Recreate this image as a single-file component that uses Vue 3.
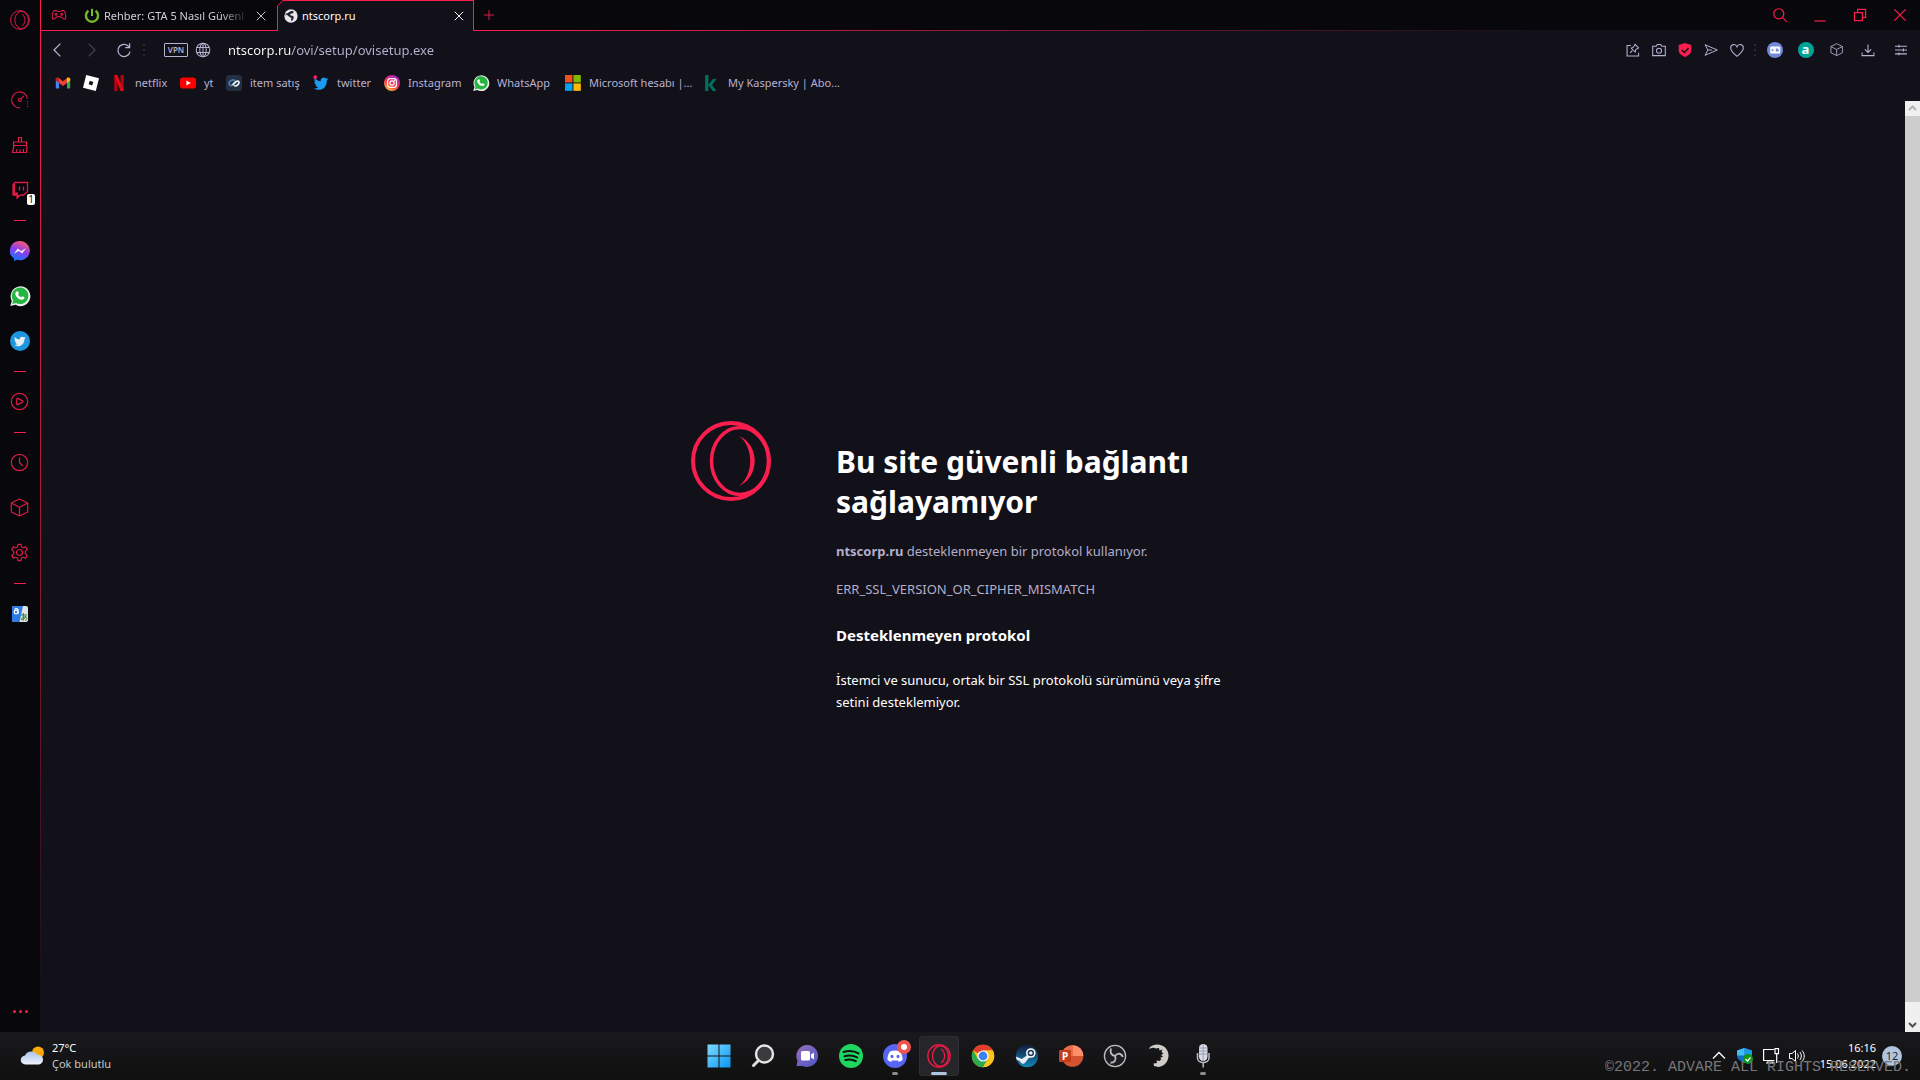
<script setup>
import { ref } from 'vue'

const address = ref('ntscorp.ru/ovi/setup/ovisetup.exe')

const icons = {
  opera: '<g fill="none" stroke="currentColor"><circle cx="10" cy="10" r="9.400"/><ellipse cx="11.600" cy="10" rx="6.800" ry="8.600"/><path d="M12 4.200c4 3 4 8.600 0 11.600"/></g>',
  gauge: '<g fill="none" stroke="currentColor" stroke-width="1.1"><path d="M10 17.900a8 8 0 1 1 7.500-9.200"/><path d="M17.600 11v6" stroke-dasharray="1 1.500"/><circle cx="9.800" cy="10" r="1.500"/><path d="M10.900 8.900l3-3"/></g>',
  broom: '<g fill="none" stroke="currentColor" stroke-width="1.200"><path d="M8.500 7V2.500h3V7M3.500 7h13v3.500h-13zM4 10.500L2.500 17.500h14l.5-7M6.500 17l.5-3M10 17v-2.500M13.500 17v-3"/></g>',
  twitch: '<path d="M3 5l2-2.500h12.500v9L13.500 15h-3L7 18v-3H3z" fill="none" stroke="currentColor" stroke-width="1.300"/><path d="M3 5l2-2v9.500h3V15h2l-3 3v-3H3z" fill="currentColor"/><path d="M9.500 6.500v4M13.500 6.500v4" stroke="currentColor" stroke-width="1.300"/>',
  messenger: '<defs><linearGradient id="ms" x1="0.300" y1="1" x2="0.700" y2="0"><stop offset="0" stop-color="#0a7cff"/><stop offset=".5" stop-color="#8a3df0"/><stop offset="1" stop-color="#ff5c6a"/></linearGradient></defs><path d="M10 0a10 9.600 0 1 1-3 18.800L4 20v-2.400A9.700 9.700 0 0 1 10 0z" fill="url(#ms)"/><path d="M3.800 12.700l4-5.200 3.300 2.400 5-2.700-4 5.300-3.300-2.400z" fill="#eee"/>',
  whatsapp: '<path d="M.3 20l1.500-5A9.900 9.900 0 1 1 5.500 18.800z" fill="#eee"/><path d="M2.200 18l1-3.600A8.300 8.300 0 1 1 6 17z" fill="#25b541"/><path d="M7 5.300c.5-.3 1 0 1.200.5l.6 1.500c0 .4-.5.8-.7 1.200.7 1.400 1.700 2.200 3.200 2.800.4-.2.800-1 1.200-1l1.900 1c.2 1.200-.7 2.200-2 2.400C8.700 14 5 10 5.300 7.200 5.500 6.200 6.300 5.500 7 5.300z" fill="#fff"/>',
  twitterRound: '<circle cx="10" cy="10" r="10" fill="#1d96e0"/><path d="M15.700 6.600l-1.300.4c.5-.3.800-.7 1-1.200l-1.500.6a2.500 2.500 0 0 0-4.200 2.200C7.500 8.500 5.900 7.500 4.800 6.100c-.7 1.200-.3 2.500.7 3.200l-1-.3c0 1.200.8 2 1.900 2.400h-1c.3 1 1.200 1.600 2.200 1.700-1 .8-2.200 1.100-3.500 1 5 2.900 10.500-.4 10.400-6.200z" fill="#eee"/>',
  player: '<g fill="none" stroke="currentColor" stroke-width="1.200"><circle cx="9.500" cy="9.500" r="8.200"/><path d="M6.700 7c0-.6.4-.8.9-.6l5 2.500c.5.300.5.900 0 1.200l-5 2.500c-.5.200-.9 0-.9-.6z"/></g>',
  clock: '<g fill="none" stroke="currentColor" stroke-width="1.200"><circle cx="9.500" cy="9.500" r="8.200"/><path d="M9.500 4.500v5l3.200 3.500"/></g>',
  cube: '<path d="M9.500 1l8.200 4v9l-8.200 4-8.200-4V5zM1.300 5l8.200 4.300L17.700 5M9.500 9.300V18" fill="none" stroke="currentColor" stroke-width="1.200" stroke-linejoin="round"/>',
  gear: '<g fill="none" stroke="currentColor" stroke-width="1.200" stroke-linejoin="round" transform="translate(-.5 -.5)"><circle cx="10" cy="10" r="3"/><path d="M8 4.400L8.500 1.800h3L12 4.400l1.600.9 2.500-.9 1.700 2.700-2 1.800v2.200l2 1.800-1.700 2.700-2.500-.9-1.600.9-.5 2.600h-3L8 15.600l-1.600-.9-2.500.9-1.700-2.700 2-1.800V8.900l-2-1.800 1.700-2.700 2.500.9z"/></g>',
  translate: '<rect x="2" y="2" width="16" height="16" rx="2" fill="#e2e2e2"/><path d="M4 2h9L9.500 18H4a2 2 0 0 1-2-2V4a2 2 0 0 1 2-2z" fill="#2d7be5"/><circle cx="6" cy="8" r="1.800" fill="none" stroke="#fff" stroke-width="1.200"/><path d="M4.500 5.200c2-1 3.600-.4 3.600 1.300v3.600" fill="none" stroke="#fff" stroke-width="1.200"/><path d="M11 11h6M13.300 9v7.500M16 12c-1 3-3.500 4.500-4.500 3.500s2-3.200 4-2.500 1.500 3-.5 3.500" fill="none" stroke="#2f7d32"/>',
  gamepad: '<g fill="none" stroke="currentColor" stroke-width="1.400"><path d="M4 4.500h2.500c1.500 1.500 5.500 1.500 7 0H16c1.500 1.500 2.500 5 2.500 9 0 2.200-3 2.200-4 .2-1.200-2.200-7.800-2.200-9 0-1 2-4 2-4-.2 0-4 1-7.500 2.500-9z"/><circle cx="6.500" cy="9" r="1.200"/><circle cx="13.500" cy="9" r="1.200"/></g>',
  power: '<path d="M5.500 3.500a7.600 7.600 0 1 0 9 0" fill="none" stroke="#76b82a" stroke-width="3"/><path d="M10 1v9" stroke="#76b82a" stroke-width="2.600"/>',
  earth: '<circle cx="10" cy="10" r="9.500" fill="#e8e8ec"/><path d="M11 2.500l3 1.500-1 2-3 .5-1.500 2.500 3.500.5 2 1.500-.5 3-2 3-1.500-.5.500-3.500-2.500-1.500L3.500 8 2 9.500l.5-3 2.500-.3 2-1.700z" fill="#25232c"/>',
  close: '<path d="M3 3l14 14M17 3L3 17" stroke="currentColor" stroke-width="1.600"/>',
  plus: '<path d="M10 1.500v17M1.500 10h17" stroke="currentColor" stroke-width="1.700"/>',
  search: '<g fill="none" stroke="currentColor" stroke-width="1.500"><circle cx="8.500" cy="8.500" r="6.300"/><path d="M13 13l5.500 5.500"/></g>',
  minimise: '<path d="M3 17.500h14" stroke="currentColor" stroke-width="1.500"/>',
  restore: '<path d="M3 7h10v10H3zM7 7V3h10v10h-4" fill="none" stroke="currentColor" stroke-width="1.500"/>',
  back: '<path d="M13 2L5 10l8 8" fill="none" stroke="currentColor" stroke-width="1.600"/>',
  forward: '<path d="M7 2l8 8-8 8" fill="none" stroke="currentColor" stroke-width="1.600"/>',
  reload: '<path d="M16.500 6.500A7.600 7.600 0 1 0 17.500 12M17 1.500v5.500h-5.500" fill="none" stroke="currentColor" stroke-width="1.600"/>',
  globe: '<g fill="none" stroke="currentColor" stroke-width="1.300"><circle cx="10" cy="10" r="8.500"/><ellipse cx="10" cy="10" rx="4" ry="8.500"/><path d="M2.500 7h15M2.500 13h15M10 1.500v17"/></g>',
  pin: '<path d="M7 3.500H1.500v15h16.500V14M6 14l3-3M7.500 7.500l5.500 5.500 1-3.500 4-2.500-5-5L10.500 6z" fill="none" stroke="currentColor" stroke-width="1.500"/>',
  camera: '<g fill="none" stroke="currentColor" stroke-width="1.500"><path d="M1 4.500h5L7.500 2h5L14 4.500h5v13.500H1z"/><circle cx="10" cy="11" r="3.600"/></g>',
  shield: '<path d="M10 0l9 2.800v8c0 4.500-4.500 7.200-9 9.200-4.500-2-9-4.700-9-9.200v-8z" fill="#fa1e4e"/><path d="M5.500 10l3.500 3.500 6-6" fill="none" stroke="#121019" stroke-width="2.200"/>',
  send: '<path d="M1.500 2.500L19 10 1.500 17.500 5.500 10zM5.500 10h6" fill="none" stroke="currentColor" stroke-width="1.400"/>',
  heart: '<path d="M10 19C5 14.500 1 11.500 1 7c0-5.500 7-6.500 9-1.500C12 .5 19 1.500 19 7c0 4.500-4 7.500-9 12z" fill="none" stroke="currentColor" stroke-width="1.500"/>',
  account: '<circle cx="10" cy="10" r="10" fill="#7289da"/><rect x="4" y="5.500" width="12.500" height="9" rx="1.500" fill="#fff"/><path d="M6 8l3 2-3 2zM11 8h2l1.500 1.500V12H11z" fill="#7289da"/>',
  assistant: '<circle cx="10" cy="10" r="10" fill="#00a396"/>',
  download: '<path d="M10 2v11M5.500 9l4.500 4.500L14.500 9M1.500 13.500v4.500h17v-4.500" fill="none" stroke="currentColor" stroke-width="1.500"/>',
  sliders: '<path d="M1.500 4.500h17M1.500 10h17M1.500 15.500h17M7 2.500v4M13.500 8v4M7 13.500v4" stroke="currentColor" stroke-width="1.500"/>',
  gmail: '<path d="M1 4.500h4V17H2a1 1 0 0 1-1-1z" fill="#4285f4"/><path d="M15 4.500h4V16a1 1 0 0 1-1 1h-3z" fill="#34a853"/><path d="M1 5.500C1 3 3.500 2.500 5 3.500V10L1 7z" fill="#c5221f"/><path d="M5 3.700l5 4 5-4V10l-5 3.800L5 10z" fill="#ea4335"/><path d="M19 5.500c0-2.500-2.500-3-4-2V10l4-3z" fill="#fbbc04"/>',
  roblox: '<path d="M4 0l16 4.200L16 20 0 15.800zM8.500 7.200l-1.400 4.400 4.400 1.400 1.400-4.400z" fill="#fff" fill-rule="evenodd"/>',
  netflix: '<path d="M4 0h4v20H4zM12 0h4v20h-4z" fill="#b1060f"/><path d="M4 0h4l8 20h-4z" fill="#e50914"/>',
  youtube: '<rect y="3" width="20" height="14" rx="3.500" fill="#f00"/><path d="M8 7l5.500 3L8 13z" fill="#fff"/>',
  item: '<rect width="20" height="20" rx="4" fill="#232f42"/><path d="M11 7c-2-2-6 0-7 2.500-.8 3 2 4.500 4.500 3L13 8" fill="none" stroke="#4f7fb0" stroke-width="2.200"/><path d="M8 12.500l4-4C15 6.500 17 8 16 10.500c-1 2.500-4 4-6 2.500" fill="none" stroke="#e8edf2" stroke-width="2.200"/>',
  bird: '<path d="M18.800 4.600l-2 .7c.8-.5 1.200-1.200 1.500-2l-2.300 1A3.900 3.900 0 0 0 9.500 7.700C6.500 7.500 4 6 2.200 4c-1 1.900-.4 4 1.100 5.200L1.700 8.800c0 1.900 1.300 3.200 3 3.700l-1.600.1c.5 1.500 1.900 2.600 3.500 2.700-1.600 1.200-3.500 1.700-5.400 1.500 8 4.700 16.200-.5 16-9.700z" fill="#1d9bf0"/><circle cx="2.800" cy="2.600" r="2.400" fill="#fa1e6e"/>',
  instagram: '<defs><linearGradient id="ig" x1="0.200" y1="1" x2="0.800" y2="0"><stop offset="0" stop-color="#ffc83c"/><stop offset=".45" stop-color="#f8344f"/><stop offset="1" stop-color="#a023d8"/></linearGradient></defs><circle cx="10" cy="10" r="10" fill="url(#ig)"/><rect x="4.500" y="4.500" width="11" height="11" rx="3" fill="none" stroke="#fff" stroke-width="1.500"/><circle cx="10" cy="10" r="2.700" fill="none" stroke="#fff" stroke-width="1.500"/><circle cx="13.200" cy="6.800" r=".8" fill="#fff"/>',
  microsoft: '<path d="M0 0h9.300v9.300H0z" fill="#f25022"/><path d="M10.500 0h9.300v9.300h-9.300z" fill="#7fba00"/><path d="M0 10.500h9.300v9.300H0z" fill="#00a4ef"/><path d="M10.500 10.500h9.300v9.300h-9.300z" fill="#ffb900"/>',
  kaspersky: '<path d="M1.500 0h4v20h-4zM11 5h4.500l-5.500 7.500 5.500 7.500H11l-5.500-7.500z" fill="#007360"/>',
}

const strip = [
  ['gauge', 'broom', 'twitch'],
  ['messenger', 'whatsapp', 'twitterRound'],
  ['player'],
  ['clock', 'cube', 'gear'],
  ['translate'],
]

const bookmarks = [
  { icon: 'gmail' },
  { icon: 'roblox' },
  { icon: 'netflix', label: 'netflix', width: 33 },
  { icon: 'youtube', label: 'yt', width: 10 },
  { icon: 'item', label: 'item satış', width: 51 },
  { icon: 'bird', label: 'twitter', width: 35 },
  { icon: 'instagram', label: 'Instagram', width: 53 },
  { icon: 'whatsapp', label: 'WhatsApp', width: 56 },
  { icon: 'microsoft', label: 'Microsoft hesabı |...', width: 103 },
  { icon: 'kaspersky', label: 'My Kaspersky | Abo...', width: 113 },
]

const apps = [
  { name: 'Start', art: '<defs><linearGradient id="w" x1="0" y1="0" x2="1" y2="1"><stop offset="0" stop-color="#7fdcff"/><stop offset="1" stop-color="#0a94f5"/></linearGradient></defs><path d="M0 0h11v11H0zM12 0h11v11H12zM0 12h11v11H0zM12 12h11v11H12z" fill="url(#w)" transform="translate(.5 .5)"/>' },
  { name: 'Search', art: '<circle cx="13.500" cy="10" r="8.500" fill="#3b3b3d" stroke="#e6e6e6" stroke-width="2.400"/><path d="M7.500 16.500l-5 5" stroke="#dcdcdc" stroke-width="3" stroke-linecap="round"/>' },
  { name: 'Chat', art: '<defs><linearGradient id="ch" x1="0" y1="0" x2="1" y2="1"><stop offset="0" stop-color="#9a6fb8"/><stop offset="1" stop-color="#4a56c8"/></linearGradient></defs><path d="M12.500 1a11 11 0 1 1-5 21H1.500l1-5A11 11 0 0 1 12.500 1z" fill="url(#ch)"/><rect x="6" y="7" width="9" height="9.500" rx="1.500" fill="#fff"/><path d="M16 10.500l3-2v7l-3-2z" fill="#fff"/>' },
  { name: 'Spotify', art: '<circle cx="12" cy="12" r="12" fill="#1ed760"/><path d="M4.500 8c5-1.500 11-1 15 1.400M5.500 12.200c4-1.200 9.300-.7 12.800 1.300M6.300 16c3.500-1 7.500-.6 10.600 1.100" fill="none" stroke="#111" stroke-width="2" stroke-linecap="round"/>' },
  { name: 'Discord', run: true, art: '<circle cx="12" cy="12" r="12" fill="#5865f2"/><path d="M7 7.500c3-1.500 7-1.500 10 0 2 3 2.800 5.700 2.500 8.500-1.500 1-2.500 1.500-4 1.800l-1-1.600c-1.700.5-3.300.5-5 0l-1 1.600c-1.500-.3-2.500-.8-4-1.800-.3-2.800.5-5.500 2.500-8.500z" fill="#fff"/><ellipse cx="9" cy="12.500" rx="1.500" ry="1.700" fill="#5865f2"/><ellipse cx="15" cy="12.500" rx="1.500" ry="1.700" fill="#5865f2"/><circle cx="21" cy="3" r="7" fill="#ef5350"/><circle cx="21" cy="3" r="3" fill="#fff"/>' },
  { name: 'Opera GX', active: true, art: '<g fill="none" stroke="#e01b44" stroke-width="1.400"><circle cx="12" cy="12" r="11.200"/><ellipse cx="13.500" cy="12" rx="8" ry="10.200"/><path d="M14 5c4.800 3.500 4.800 10.500 0 14"/></g>' },
  { name: 'Chrome', art: '<circle cx="12" cy="12" r="11.200" fill="#fbc116"/><path d="M12 12L2.300 6.400A11.200 11.200 0 0 1 21.700 6.400H12z" fill="#e33b2e"/><path d="M2.300 6.400A11.200 11.200 0 0 0 12 23.200l5-8.500L12 12 7 15z" fill="#2da94f"/><path d="M21.700 6.400H12V12l5 2.700-5 8.500A11.200 11.200 0 0 0 21.700 6.400z" fill="#fcc31e"/><circle cx="12" cy="12" r="5.600" fill="#fff"/><circle cx="12" cy="12" r="4.400" fill="#3b82f0"/>' },
  { name: 'Steam', art: '<defs><linearGradient id="st" x1="0" y1="0" x2="0" y2="1"><stop offset="0" stop-color="#111d3c"/><stop offset="1" stop-color="#1387b8"/></linearGradient></defs><circle cx="12" cy="12" r="11.200" fill="url(#st)"/><path d="M.8 12.500l6 2.500 5-3.500 2-5.500 5 4.500-5 3.500-3.500 4.500c-2 2.500-4.500 1-5-1L1.600 15.500z" fill="#e8edf2"/><circle cx="15.800" cy="9" r="4" fill="#1a3358" stroke="#fff" stroke-width="1.600"/><circle cx="15.800" cy="9" r="1.800" fill="#e8edf2"/>' },
  { name: 'PowerPoint', tile: 'P', art: '<circle cx="13.500" cy="12" r="10.800" fill="#d35230"/><path d="M13.500 1.200A10.800 10.800 0 0 1 24.300 12H13.500z" fill="#ff8f6b"/><path d="M13.500 1.200A10.800 10.800 0 0 0 2.700 12h10.800z" fill="#ed6c47"/><rect x="0" y="6" width="12" height="12" rx="1" fill="#c43e1c"/>' },
  { name: 'OBS', art: '<circle cx="12" cy="12" r="10.600" fill="#1e1d22" stroke="#bdbdbd" stroke-width="1.300"/><path d="M8 4.500c-1.500 4 .5 7 4 7.500M19.800 13c-1.500-4-5-4.500-7.800-1M7.500 18.800c4.500 0 6-3.500 4.500-6.800" fill="none" stroke="#bdbdbd" stroke-width="1.900"/>' },
  { name: 'Launcher', art: '<path d="M2.500 3.500C9-2.500 20.500 1 21.500 10.500c.5 7-4.500 12-10 12.500l-4.500-1-.5-2.500 3.500-.5-.5-2.500 3 .5 2-2-1.500-1 3-1.500-2-1.500 2.500-1.500-2-1.500 1-2.500-3 1-.5-2.500-3 .5C7.500 3.500 5 3.500 2.500 5z" fill="#d0cdc8"/>' },
  { name: 'Recorder', run: true, art: '<rect x="8" y="0" width="8.500" height="17" rx="4.200" fill="#d9dce6"/><path d="M8 4h8.500M8 7h8.500M8 10h8.500M12.200 0v17" stroke="#8d91a0" stroke-width=".8"/><path d="M6.500 9v5c0 6 11.500 6 11.500 0V9M12.200 18.500v5" fill="none" stroke="#b9bdc9" stroke-width="1.500"/>' },
]
</script>

<template>
  <div class="screen">
    <div class="browser">
      <nav class="strip" aria-label="Sidebar">
        <button class="logo" aria-label="Opera"><svg viewBox="0 0 20 20" v-html="icons.opera" /></button>
        <div v-for="(group, g) in strip" :key="g" class="group">
          <button v-for="name in group" :key="name" :aria-label="name">
            <svg viewBox="0 0 20 20" v-html="icons[name]" />
            <span v-if="name === 'twitch'" class="count">1</span>
          </button>
        </div>
        <button class="more" aria-label="More"><i /><i /><i /></button>
      </nav>

      <div class="window">
        <header class="tabs">
          <button class="pad" aria-label="GX Corner"><svg viewBox="0 0 20 20" v-html="icons.gamepad" /></button>
          <div class="tab">
            <svg viewBox="0 0 20 20" v-html="icons.power" />
            <span class="title fade">Rehber: GTA 5 Nasıl Güvenl</span>
            <button aria-label="Close tab"><svg viewBox="0 0 20 20" v-html="icons.close" /></button>
          </div>
          <div class="tab active">
            <svg viewBox="0 0 20 20" v-html="icons.earth" />
            <span class="title">ntscorp.ru</span>
            <button aria-label="Close tab"><svg viewBox="0 0 20 20" v-html="icons.close" /></button>
          </div>
          <button class="new" aria-label="New tab"><svg viewBox="0 0 20 20" v-html="icons.plus" /></button>
          <div class="controls">
            <button v-for="name in ['search', 'minimise', 'restore', 'close']" :key="name" :aria-label="name">
              <svg viewBox="0 0 20 20" v-html="icons[name]" />
            </button>
          </div>
        </header>

        <div class="toolbar">
          <button class="step" aria-label="Back"><svg viewBox="0 0 20 20" v-html="icons.back" /></button>
          <button class="step off" aria-label="Forward" disabled><svg viewBox="0 0 20 20" v-html="icons.forward" /></button>
          <button class="step" aria-label="Reload"><svg viewBox="0 0 20 20" v-html="icons.reload" /></button>
          <span class="dots"><i /><i /><i /></span>
          <button class="vpn">VPN</button>
          <button class="site" aria-label="Site information"><svg viewBox="0 0 20 20" v-html="icons.globe" /></button>
          <input v-model="address" class="url" type="text" aria-label="Address" spellcheck="false">
          <div class="actions">
            <button v-for="name in ['pin', 'camera', 'shield', 'send', 'heart']" :key="name" :aria-label="name">
              <svg viewBox="0 0 20 20" v-html="icons[name]" />
            </button>
          </div>
          <span class="dots"><i /><i /><i /></span>
          <div class="actions wide">
            <button aria-label="Account"><svg class="round" viewBox="0 0 20 20" v-html="icons.account" /></button>
            <button aria-label="Assistant"><svg class="round" viewBox="0 0 20 20" v-html="icons.assistant" /><b>a</b></button>
            <button aria-label="Extensions"><svg viewBox="0 0 20 20" v-html="icons.cube" /></button>
            <button aria-label="Downloads"><svg viewBox="0 0 20 20" v-html="icons.download" /></button>
            <button aria-label="Easy setup"><svg viewBox="0 0 20 20" v-html="icons.sliders" /></button>
          </div>
        </div>

        <nav class="bookmarks" aria-label="Bookmarks">
          <a v-for="b in bookmarks" :key="b.icon" href="#" :aria-label="b.label || b.icon">
            <svg viewBox="0 0 20 20" v-html="icons[b.icon]" />
            <span v-if="b.label" :style="{ width: b.width + 'px' }">{{ b.label }}</span>
          </a>
        </nav>

        <div class="view">
          <main>
            <svg class="mark" viewBox="0 0 80 80" fill="none" stroke="#fa1e4e">
              <circle cx="40" cy="40" r="38" stroke-width="4" />
              <ellipse cx="49" cy="40" rx="28.500" ry="33.500" stroke-width="3.500" />
              <path d="M48 15C69 24 69 56 48 65C63 54 63 26 48 15z" fill="#fa1e4e" stroke="none" />
            </svg>
            <section>
              <h1>Bu site güvenli bağlantı sağlayamıyor</h1>
              <p class="soft"><strong>ntscorp.ru</strong> desteklenmeyen bir protokol kullanıyor.</p>
              <p class="soft code">ERR_SSL_VERSION_OR_CIPHER_MISMATCH</p>
              <h2>Desteklenmeyen protokol</h2>
              <p>İstemci ve sunucu, ortak bir SSL protokolü sürümünü veya şifre setini desteklemiyor.</p>
            </section>
          </main>
          <div class="scroll">
            <svg viewBox="0 0 15 15"><path d="M4 9l3.500-3.500L11 9" fill="none" stroke="#b4b4b4" stroke-width="2" /></svg>
            <span class="thumb" />
            <svg viewBox="0 0 15 15"><path d="M4 6l3.500 3.500L11 6" fill="none" stroke="#505050" stroke-width="2" /></svg>
          </div>
        </div>
      </div>
    </div>

    <footer class="taskbar">
      <button class="weather">
        <svg viewBox="0 0 24 20">
          <defs><linearGradient id="cl" x1="0" y1="0" x2="0" y2="1"><stop offset="0" stop-color="#a9c4ec" /><stop offset="1" stop-color="#eef3fb" /></linearGradient></defs>
          <circle cx="18" cy="6.500" r="6" fill="#fba90a" />
          <path d="M5.500 18.500a4.500 4.500 0 0 1-.5-9A7 7 0 0 1 17.500 9a4.800 4.800 0 0 1 1.500 9.500z" fill="url(#cl)" />
        </svg>
        <span><em>27°C</em><br>Çok bulutlu</span>
      </button>
      <div class="apps">
        <button v-for="a in apps" :key="a.name" :aria-label="a.name" :class="{ active: a.active, run: a.run }">
          <svg viewBox="0 0 24 24" v-html="a.art" />
          <b v-if="a.tile">{{ a.tile }}</b>
        </button>
      </div>
      <div class="tray">
        <button aria-label="Hidden icons"><svg viewBox="0 0 16 16"><path d="M2 10.500l6-6 6 6" fill="none" stroke="#fff" stroke-width="1.300" /></svg></button>
        <button aria-label="Security"><svg viewBox="0 0 16 16"><path d="M7.500 0L15 2.500v5c0 4-4 6-7.500 7.500C4 13.500 0 11.500 0 7.500v-5z" fill="#0f6fc5" /><path d="M7.500 0v7.500H0v-5z" fill="#3fc0f5" /><path d="M7.500 0L15 2.500v5H7.500z" fill="#1e9be8" /><circle cx="11" cy="11" r="5" fill="#109618" /><path d="M8.500 11l2 2 3-3.500" fill="none" stroke="#fff" stroke-width="1.200" /></svg></button>
        <button aria-label="Network"><svg viewBox="0 0 16 16"><path d="M11 1.500H.6v11h10.800M3 15h9M5 12.500V15M9.500 12.500V15M12 .6h3.500v5H12zM13.700 5.500V15" fill="none" stroke="#fff" stroke-width="1.200" /></svg></button>
        <button aria-label="Volume"><svg viewBox="0 0 16 16"><path d="M.5 5.500h2.500l3.500-3v11L3 10.500H.5zM8.500 5.500c1 1.500 1 3.500 0 5M10.800 4c2 2.500 2 5.500 0 8M13 2.500c3 3.500 3 7.500 0 11" fill="none" stroke="#fff" /></svg></button>
        <time>16:16<br>15.06.2022</time>
        <span class="badge">12</span>
      </div>
      <span class="watermark">©2022. ADVARE ALL RIGHTS RESERVED.</span>
    </footer>
  </div>
</template>

<style>
body { margin: 0; background: #08070b; }
</style>

<style scoped>
.screen {
  --red: #fa1e4e;
  --panel: #121019;
  --ink: #b8b2d2;
  display: flex;
  flex-direction: column;
  height: 100vh;
  overflow: hidden;
  background: #08070b;
  color: #fff;
  font: 11px/16px "Noto Sans", "Open Sans", sans-serif;
}
button { display: flex; align-items: center; justify-content: center; padding: 0; border: 0; background: none; color: inherit; font: inherit; }
svg { display: block; flex: none; overflow: visible; }
.browser { display: flex; flex: 1; min-height: 0; }

.strip { display: flex; flex-direction: column; width: 40px; color: #dc1c46; border-right: 1px solid; border-image: linear-gradient(#fa1e4e, #b01a3c 45%, #121019 97%) 1; }
.strip button { position: relative; width: 40px; height: 45px; }
.strip svg { width: 20px; height: 20px; }
.strip .logo { height: 40px; margin-bottom: 37px; }
.group + .group::before { content: ""; display: block; width: 12px; height: 1px; margin: 8px 14px 7px; background: #fa1e4e; }
.count { position: absolute; left: 27px; top: 27px; width: 8px; height: 11px; border-radius: 2px; background: #fff; color: #111; font-size: 10px; line-height: 11px; text-align: center; }
.strip .more { margin-top: auto; height: 42px; gap: 3px; }
.more i { width: 3px; height: 3px; border-radius: 2px; background: #fa1e4e; }

.window { display: flex; flex: 1; flex-direction: column; min-width: 0; background: var(--panel); }
.tabs { display: flex; height: 31px; background: linear-gradient(90deg, #fa1e4e 25%, #121019 80%) bottom / 100% 1px no-repeat #08070b; color: #dc1c46; }
.pad { width: 37px; height: 30px; }
.pad svg { width: 16px; height: 16px; margin-right: 2px; }
.tab { display: flex; align-items: center; box-sizing: border-box; width: 199px; height: 31px; padding: 0 8px 0 6px; gap: 4px; color: #d0cdd8; }
.tab > svg { width: 16px; height: 16px; }
.tab .title { flex: 1; min-width: 0; overflow: hidden; white-space: nowrap; }
.tab .fade { mask-image: linear-gradient(90deg, #000 80%, transparent); }
.tab button { width: 16px; height: 30px; }
.tab button svg { width: 12px; height: 12px; }
.tab.active { position: relative; width: 197px; padding: 0 7px; color: #fff; background: var(--red); clip-path: polygon(6px 0, 100% 0, 100% 100%, 0 100%, 0 6px); }
.tab.active::before { content: ""; position: absolute; inset: 1px 1px 0; background: var(--panel); clip-path: polygon(5px 0, 100% 0, 100% 100%, 0 100%, 0 5px); }
.tab.active > * { position: relative; }
.tab.active > svg { width: 14px; height: 14px; }
.new { width: 30px; height: 30px; }
.new svg { width: 12px; height: 12px; }
.controls { display: flex; margin-left: auto; color: var(--red); }
.controls button { width: 40px; height: 30px; }
.controls svg { width: 16px; height: 16px; }

.toolbar { display: flex; align-items: center; height: 38px; color: var(--ink); }
.step { width: 33px; height: 38px; }
.step svg { width: 16px; height: 16px; }
.step.off { color: #46424f; }
.dots { display: flex; flex-direction: column; align-items: center; gap: 3px; width: 9px; }
.step + .dots { width: 7px; }
.dots i { width: 2px; height: 2px; background: #2b2836; }
.vpn { box-sizing: border-box; width: 24px; height: 14px; margin-left: 17px; border: 1px solid; border-radius: 1px; font-size: 8px; line-height: 12px; font-weight: 600; }
.site { width: 30px; height: 38px; }
.site svg { width: 16px; height: 16px; }
.url { flex: 1; min-width: 0; height: 30px; padding: 0 0 0 10px; border: 0; outline: 0; font: 13px/30px "Noto Sans", sans-serif; color: transparent; background: linear-gradient(90deg, #fff 73px, #b8b2d2 73px); background-clip: text; }
.actions { display: flex; }
.actions button { position: relative; width: 26px; height: 38px; }
.actions svg { width: 14px; height: 14px; }
.actions .round { width: 16px; height: 16px; }
.actions b { position: absolute; inset: 0; font-size: 13px; line-height: 36px; color: #fff; text-align: center; }
.wide { padding-right: 2px; }
.wide button { width: 31px; }
.wide button:last-child { width: 35px; }

.bookmarks { display: flex; align-items: center; gap: 12px; height: 28px; margin-bottom: 4px; padding-left: 14px; }
.bookmarks a { display: flex; align-items: center; gap: 8px; color: var(--ink); text-decoration: none; white-space: nowrap; }
.bookmarks svg { width: 16px; height: 16px; }

.view { display: flex; flex: 1; min-height: 0; }
main { display: flex; flex: 1; align-items: flex-start; justify-content: center; gap: 65px; align-self: center; }
.mark { width: 80px; height: 80px; }
section { width: 419px; padding-top: 21px; }
h1 { margin: 0 0 18px; font-size: 30px; line-height: 40px; font-weight: 700; }
p { margin: 0; font-size: 13px; line-height: 22px; }
.soft { color: #b4aecb; }
.code { margin-top: 16px; }
h2 { margin: 24px 0 23px; font-size: 15px; line-height: 22px; font-weight: 700; }
.scroll { display: flex; flex-direction: column; width: 15px; background: #f0f0f0; }
.scroll svg { width: 15px; height: 15px; }
.thumb { flex: 1; margin-bottom: 15px; background: #cdcdcd; }

.taskbar { position: relative; display: grid; grid-template-columns: 1fr auto 1fr; align-items: center; height: 48px; background: linear-gradient(#19191d, #101010); }
.weather { justify-self: start; gap: 8px; padding-left: 20px; text-align: left; color: #c8c8c8; }
.weather svg { width: 24px; height: 20px; }
.weather em { font-style: normal; color: #fff; }
.apps { display: flex; gap: 4px; padding-left: 2px; }
.apps button { position: relative; width: 40px; height: 40px; border-radius: 4px; }
.apps svg { width: 24px; height: 24px; }
.apps b { position: absolute; left: 8px; top: 14px; width: 12px; font-size: 10px; line-height: 12px; }
.apps .active { background: #26262a; box-shadow: inset 0 0 0 1px #2f2f33; }
.apps .active::after, .apps .run::after { content: ""; position: absolute; bottom: 1px; left: 17px; width: 6px; height: 3px; border-radius: 2px; background: #8c8c8c; }
.apps .active::after { left: 12px; width: 16px; background: #b0c4e0; }
.tray { display: flex; align-items: center; justify-self: end; gap: 10px; padding-right: 18px; }
.tray svg { width: 16px; height: 16px; }
time { width: 61px; text-align: right; }
.badge { width: 20px; height: 20px; margin-left: -4px; border-radius: 10px; background: #b0c4de; color: #1c2430; line-height: 20px; text-align: center; }
.watermark { position: absolute; right: 9px; bottom: 3px; color: #77777a; font: 15px/18px "Liberation Mono", monospace; white-space: nowrap; }
</style>
